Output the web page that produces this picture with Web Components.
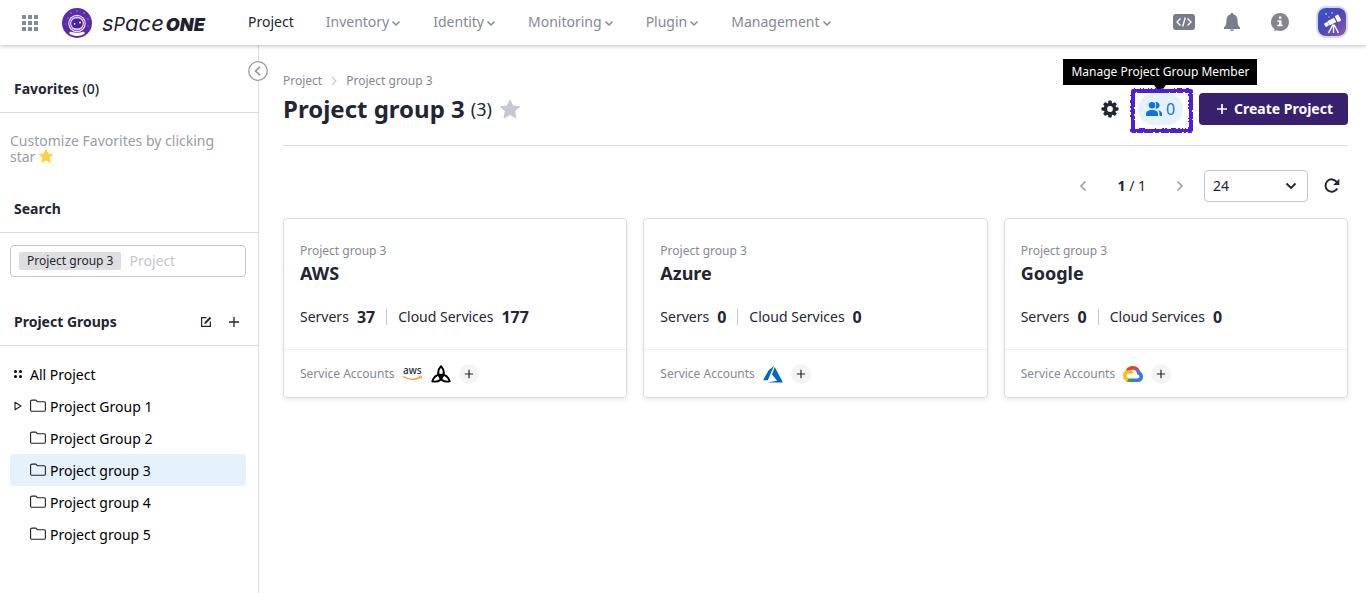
<!DOCTYPE html>
<html lang="en">
<head>
<meta charset="utf-8">
<meta name="viewport" content="width=device-width, initial-scale=1">
<title>SpaceONE - Project group 3</title>
<style>
  body { margin: 0; background: #fff; color: #232533; font: 14px/20px "Noto Sans", sans-serif; }
</style>
</head>
<body>
<space-app></space-app>

<script>
const ICONS = {
  grid: [16, 16, '<g fill="#858895"><path d="M0 0h4v4H0zM6 0h4v4H6zM12 0h4v4h-4zM0 6h4v4H0zM6 6h4v4H6zM12 6h4v4h-4zM0 12h4v4H0zM6 12h4v4H6zM12 12h4v4h-4z"/></g>'],
  astronaut: [30, 30, '<circle cx="15" cy="15" r="15" fill="#5a2aa8"/><g fill="#b79be0"><circle cx="6" cy="10" r=".7"/><circle cx="9" cy="5" r=".7"/><circle cx="15" cy="3" r=".7"/><circle cx="22" cy="5" r=".8"/><circle cx="26" cy="11" r=".7"/><circle cx="4" cy="16" r=".6"/><circle cx="26" cy="18" r=".6"/></g><circle cx="15" cy="15.500" r="8.800" fill="#e6dcf6"/><circle cx="15" cy="15.500" r="7.600" fill="#5a2aa8"/><circle cx="15" cy="15.500" r="7" fill="#d9caf2"/><rect x="9.300" y="10.500" width="11.400" height="9.800" rx="4.800" fill="#4c1f9c"/><circle cx="12.600" cy="15.800" r=".9" fill="#fff"/><circle cx="18" cy="14.500" r=".9" fill="#fff"/><path d="M7.500 24.500q0-1.200 1.500-.7 6 2 12 0 1.500-.5 1.500.7v1.500Q15 30 7.500 26z" fill="#fff"/>'],
  caret: [10, 10, '<path d="M1.500 3.500 5 7l3.500-3.500" fill="none" stroke="#858895" stroke-width="1.500"/>'],
  code: [22, 16, '<rect width="22" height="16" rx="3" fill="#797c89"/><path d="M7.500 4.500 4 8l3.500 3.500M14.500 4.500 18 8l-3.500 3.500M12.300 3.500l-2.600 9" fill="none" stroke="#fff" stroke-width="1.400"/>'],
  bell: [16, 18, '<path d="M8 0c.8 0 1.200.5 1.200 1.200C12 1.900 13.500 4 13.500 7c0 4.500 1.200 6.500 2.500 7.500V16H0v-1.500C1.300 13.500 2.500 11.500 2.500 7c0-3 1.500-5.100 4.300-5.800C6.800.5 7.200 0 8 0zM6 16.500h4Q9.700 18 8 18t-2-1.500z" fill="#797c89"/>'],
  info: [18, 18, '<path d="M9 0a9 9 0 1 1-3.500 17.300L3.500 18.200l-.1-2.200A9 9 0 0 1 9 0z" fill="#85868c"/><path d="M8 3.600h2.400v2.200H8zM6.500 7.200h4v4.500h1.300v1.500H6.300v-1.500h1.700V8.700H6.500z" fill="#fff"/>'],
  telescope: [32, 32, '<defs><linearGradient id="g" x1="0" y1="0" x2="1" y2="1"><stop offset="0" stop-color="#3454d1"/><stop offset=".5" stop-color="#4c48b8"/><stop offset="1" stop-color="#9659b0"/></linearGradient></defs><rect width="32" height="32" rx="10" fill="#d8d8e4"/><rect x="2" y="2" width="28" height="28" rx="8" fill="url(#g)"/><g fill="#fff"><rect x="-2" y="-2" width="4" height="4" rx="1" transform="translate(10.500 18.500) rotate(-28)"/><rect x="-4" y="-2.500" width="7.500" height="5" transform="translate(16 15.500) rotate(-28)"/><rect x="-1.500" y="-3.500" width="4" height="7" rx="1" transform="translate(21.500 12.500) rotate(-28)"/><circle cx="10" cy="8" r=".8"/><circle cx="16" cy="7" r=".7"/><circle cx="13" cy="11" r=".6"/></g><path d="M17 18.500 12.500 27M17.500 18.500V27M18 18.500 22.500 27" stroke="#fff" stroke-width="1.400"/>'],
  collapse: [20, 20, '<circle cx="10" cy="10" r="9.300" fill="#fff" stroke="#999ca8" stroke-width="1.300"/><path d="m12 5.800-4.500 4.200 4.500 4.200" fill="none" stroke="#898c98" stroke-width="1.500"/>'],
  starYellow: [14, 14, '<path d="m7 .6 2 4.300 4.600.5-3.400 3.200 1 4.700L7 10.900l-4.200 2.400 1-4.700L.4 5.400 5 4.900z" fill="#ffd13d" stroke="#ffd13d" stroke-linejoin="round"/>'],
  star: [22, 20, '<path d="m11 1 2.900 6 6.600.7-4.900 4.500 1.400 6.700-6-3.400-6 3.400 1.400-6.700L1.500 7.700 8.100 7z" fill="#c5c7d1" stroke="#c5c7d1" stroke-linejoin="round"/>'],
  edit: [12, 12, '<path d="M6.500 1.600H1.600v8.800h8.800V5.500" fill="none" stroke="#232533" stroke-width="1.200"/><path d="m4.300 7.900.4-1.900L9.900.8l1.400 1.400L6.100 7.400z" fill="#232533"/>'],
  plus: [12, 12, '<path d="M6 1v10M1 6h10" stroke="#232533" stroke-width="1.300"/>'],
  plusSmall: [10, 10, '<path d="M5 .8v8.400M.8 5h8.400" stroke="#232533" stroke-width="1.200"/>'],
  plusBold: [12, 12, '<path d="M6 1v10M1 6h10" stroke="#fff" stroke-width="1.700"/>'],
  dots: [10, 10, '<g fill="#000"><circle cx="2.500" cy="2.500" r="1.500"/><circle cx="7.500" cy="2.500" r="1.500"/><circle cx="2.500" cy="7.500" r="1.500"/><circle cx="7.500" cy="7.500" r="1.500"/></g>'],
  triangle: [10, 10, '<path d="M2 1.200v7.600L8 5z" fill="none" stroke="#222" stroke-linejoin="round" stroke-width="1.100"/>'],
  folder: [16, 14, '<path d="M.6 2.600Q.6 1.100 2 1.100h3.800l1.600 1.600H14q1.400 0 1.400 1.400v6.800q0 1.400-1.400 1.400H2q-1.400 0-1.400-1.400z" fill="none" stroke="#222" stroke-width="1.100"/>'],
  crumb: [6, 10, '<path d="m1 1 4 4-4 4" fill="none" stroke="#c9cbd3" stroke-width="1.100"/>'],
  gear: [18, 18, '<g fill="#232533"><rect x="7.200" y=".5" width="3.600" height="17" rx="1"/><rect x=".5" y="7.200" width="17" height="3.600" rx="1"/><g transform="rotate(45 9 9)"><rect x="7.200" y=".7" width="3.600" height="16.600" rx="1"/><rect x=".7" y="7.200" width="16.600" height="3.600" rx="1"/></g><circle cx="9" cy="9" r="6.300"/></g><circle cx="9" cy="9" r="2.900" fill="#fff"/>'],
  people: [16, 14, '<g fill="#0a74e6"><circle cx="6" cy="3.300" r="3.200"/><path d="M0 14v-2.200C0 9.200 2.700 8 6 8s6 1.200 6 3.800V14z"/><path d="M9.300.3a3.200 3.200 0 1 1 0 6Q11.200 3.300 9.300.3zM12 8.200c2.400.4 4 1.500 4 3.600V14h-2.500v-2.200q0-2.200-1.500-3.600z"/></g>'],
  prev: [8, 12, '<path d="M6.500 1.500 2 6l4.500 4.500" fill="none" stroke="#999ca8" stroke-width="1.600"/>'],
  next: [8, 12, '<path d="M1.500 1.500 6 6l-4.500 4.500" fill="none" stroke="#999ca8" stroke-width="1.600"/>'],
  chevron: [12, 8, '<path d="m1.500 1.500 4.500 4.500 4.500-4.500" fill="none" stroke="#232533" stroke-width="1.900"/>'],
  refresh: [16, 16, '<path d="M13.200 10.500A6.200 6.200 0 1 1 12.800 4" fill="none" stroke="#232533" stroke-width="2"/><path d="M15.300.8v6.200H9.100z" fill="#232533"/>'],
  aws: [20, 20, '<text x="0" y="10" font-family="Noto Sans, sans-serif" font-size="10" font-weight="500" fill="#252f3e">aws</text><path d="M0 12.500q9 5.300 17.500.7" fill="none" stroke="#f7981f" stroke-width="1.400"/><path d="M15.500 12.200q3.400-.7 3.200.3 0 1.300-.9 2.600" fill="none" stroke="#f7981f"/>'],
  knot: [20, 20, '<g fill="none" stroke="#000" stroke-width="1.900" stroke-linejoin="round"><path d="M10 2.200C6.300 6.500 6.500 11 10 14.500 13.500 11 13.700 6.500 10 2.200z"/><path d="M10 2.200C6.300 6.500 6.500 11 10 14.500 13.500 11 13.700 6.500 10 2.200z" transform="rotate(120 10 12.300)"/><path d="M10 2.200C6.300 6.500 6.500 11 10 14.500 13.500 11 13.700 6.500 10 2.200z" transform="rotate(240 10 12.300)"/></g>'],
  azure: [20, 18, '<path d="M11 .8 5.500 5.500 0 15.300h4.800zM11.700 2 9 9.600l5.200 6.100L4.300 17.400H20z" fill="#0067c4"/>'],
  gcp: [20, 18, '<g fill="none" stroke-width="3.600"><path d="M4.300 6.500A6 6 0 0 1 14.700 5.300" stroke="#e8402f"/><path d="M14.200 4.800q1.300 1.300 1.500 3.200 2.500.7 2.500 3.700 0 3.600-4 3.600H10" stroke="#3b78e7"/><path d="M10.500 15.300H6q-1.200 0-2-.4" stroke="#31a350"/><path d="M5 14.700q-3.200-1.100-3.200-4 0-3.700 4-3.900 2.200 0 3.200 1.700" stroke="#fbbc1f"/></g>']
};

/* Attaches an open shadow root filled from a markup string. */
function paint(el, markup) {
  const t = document.createElement('template');
  t.innerHTML = '<style>*{box-sizing:border-box}button{font:inherit;color:inherit;border:0;background:none;padding:0;cursor:pointer}a{color:inherit;text-decoration:none}</style>' + markup;
  el.attachShadow({ mode: 'open' }).append(t.content.cloneNode(true));
}

customElements.define('ui-icon', class extends HTMLElement {
  connectedCallback() {
    if (this.shadowRoot) return;
    const [w, h, body] = ICONS[this.getAttribute('name')];
    paint(this, `<style>:host{display:inline-flex;flex:none}svg{display:block;overflow:visible}</style>
      <svg width="${w}" height="${h}" viewBox="0 0 ${w} ${h}" aria-hidden="true">${body}</svg>`);
  }
});

customElements.define('brand-logo', class extends HTMLElement {
  connectedCallback() {
    if (this.shadowRoot) return;
    paint(this, `<style>
      :host{display:block}
      a{display:flex;align-items:center;gap:10px;color:#1f2130}
      .word{font-family:Inter,sans-serif;font-style:italic;line-height:30px;height:30px;white-space:nowrap}
      .low{font-size:22px;font-weight:400}
      .cap{font-size:18px;font-weight:400}
      .one{font-size:18px;font-weight:900;margin-left:2px}
    </style>
    <a href="#" aria-label="SpaceONE home"><ui-icon name="astronaut"></ui-icon><span class="word"><span class="low">s</span><span class="cap">P</span><span class="low">ace</span><span class="one">ONE</span></span></a>`);
  }
});

customElements.define('nav-item', class extends HTMLElement {
  connectedCallback() {
    if (this.shadowRoot) return;
    paint(this, `<style>
      :host{display:block;color:#858895}
      :host([active]){color:#232533}
      a{display:flex;align-items:center;gap:2px}
      ui-icon{padding-top:2px}
    </style><a href="#"><slot></slot>${this.hasAttribute('active') ? '' : '<ui-icon name="caret"></ui-icon>'}</a>`);
  }
});

customElements.define('top-bar', class extends HTMLElement {
  connectedCallback() {
    if (this.shadowRoot) return;
    paint(this, `<style>
      :host{display:block;position:relative;z-index:2;background:#fff;box-shadow:0 1px 4px rgba(0,0,0,.25)}
      header{display:flex;align-items:center;height:45px;padding:0 18px 0 22px}
      brand-logo{margin-left:24px;width:186px}
      button{display:flex}
      nav{display:flex;gap:32px;flex:1;padding-bottom:2px}
      .tools{display:flex;align-items:center;gap:24px;padding-bottom:2px}
      .tools button{justify-content:center;min-width:24px}
    </style>
    <header>
      <button aria-label="All menus"><ui-icon name="grid"></ui-icon></button>
      <brand-logo></brand-logo>
      <nav aria-label="Main">
        <nav-item active>Project</nav-item><nav-item>Inventory</nav-item><nav-item>Identity</nav-item>
        <nav-item>Monitoring</nav-item><nav-item>Plugin</nav-item><nav-item>Management</nav-item>
      </nav>
      <div class="tools">
        <button aria-label="Developer"><ui-icon name="code"></ui-icon></button>
        <button aria-label="Notifications"><ui-icon name="bell"></ui-icon></button>
        <button aria-label="Information"><ui-icon name="info"></ui-icon></button>
        <button aria-label="Account"><ui-icon name="telescope"></ui-icon></button>
      </div>
    </header>`);
  }
});

customElements.define('side-section', class extends HTMLElement {
  connectedCallback() {
    if (this.shadowRoot) return;
    paint(this, `<style>
      :host{display:block}
      header{display:flex;align-items:center;height:48px;padding:0 18px 0 14px;border-bottom:1px solid #dddddf}
      h2{margin:0;font-size:14px;line-height:20px;font-weight:700;flex:1}
      .body{padding:12px 12px 21px 10px}
    </style>
    <header><h2><slot name="title"></slot></h2><slot name="actions"></slot></header>
    <div class="body"><slot></slot></div>`);
  }
});

customElements.define('tree-item', class extends HTMLElement {
  connectedCallback() {
    if (this.shadowRoot) return;
    const lead = this.getAttribute('lead');
    paint(this, `<style>
      :host{display:block;color:#000}
      a{display:flex;align-items:center;height:32px;padding-top:2px;border-radius:4px}
      :host([selected]) a{background:#e5f2fe}
      .lead{display:flex;width:20px;padding-left:3px;padding-bottom:2px}
      .folder{margin-right:4px;padding-bottom:2px}
    </style>
    <a href="#"><span class="lead">${lead ? `<ui-icon name="${lead}"></ui-icon>` : ''}</span>${lead === 'dots' ? '' : '<ui-icon class="folder" name="folder"></ui-icon>'}<slot></slot></a>`);
  }
});

customElements.define('side-bar', class extends HTMLElement {
  connectedCallback() {
    if (this.shadowRoot) return;
    paint(this, `<style>
      :host{display:block;position:relative;padding-top:20px;border-right:1px solid #dddddf}
      .collapse{position:absolute;top:16px;right:-10px;display:flex}
      .count{font-weight:500}
      p{margin:8px 0 -1px;color:#999ca8;line-height:16px;max-width:220px}
      p ui-icon{vertical-align:-1px}
      label{display:flex;align-items:center;gap:8px;height:32px;padding:0 8px;border:1px solid #c3c4cc;border-radius:4px}
      .tag{flex:none;background:#dedee1;border-radius:2px;padding:0 8px;font-size:12px;line-height:18px}
      input{flex:1;min-width:0;border:0;outline:0;padding:0;background:none;font:inherit}
      input::placeholder{color:#c5c7d1;opacity:1}
      .actions{display:flex;align-items:center;gap:16px}
      .actions button{display:flex}
    </style>
    <button class="collapse" aria-label="Collapse sidebar"><ui-icon name="collapse"></ui-icon></button>
    <side-section><span slot="title">Favorites <span class="count">(0)</span></span>
      <p>Customize Favorites by clicking star <ui-icon name="starYellow"></ui-icon></p>
    </side-section>
    <side-section><span slot="title">Search</span>
      <label><span class="tag">Project group 3</span><input type="text" placeholder="Project" aria-label="Search project"></label>
    </side-section>
    <side-section><span slot="title">Project Groups</span>
      <div class="actions" slot="actions">
        <button aria-label="Edit groups"><ui-icon name="edit"></ui-icon></button>
        <button aria-label="Add group"><ui-icon name="plus"></ui-icon></button>
      </div>
      <tree-item lead="dots">All Project</tree-item>
      <tree-item lead="triangle">Project Group 1</tree-item>
      <tree-item>Project Group 2</tree-item>
      <tree-item selected>Project group 3</tree-item>
      <tree-item>Project group 4</tree-item>
      <tree-item>Project group 5</tree-item>
    </side-section>`);
  }
});

customElements.define('member-button', class extends HTMLElement {
  connectedCallback() {
    if (this.shadowRoot) return;
    paint(this, `<style>
      :host{display:block;position:relative}
      button{display:flex;align-items:center;justify-content:center;gap:4px;width:45px;height:32px;border-radius:16px;background:#e5f2fe;color:#0a74e6;font-size:16px}
      .frame{position:absolute;left:-9px;top:-6px;pointer-events:none;overflow:visible}
      .tip{position:absolute;top:-34px;left:50%;transform:translateX(-50%);padding:3px 8px;background:#000;color:#fff;font-size:12px;line-height:20px;white-space:nowrap}
      .tip::after{content:"";position:absolute;top:100%;left:50%;margin-left:-6px;border:6px solid transparent;border-top:8px solid #000;border-bottom:0}
    </style>
    <button aria-describedby="tip"><ui-icon name="people"></ui-icon>0</button>
    <span class="tip" id="tip" role="tooltip">Manage Project Group Member</span>
    <svg class="frame" width="63" height="45" aria-hidden="true"><filter id="rough" x="-10%" y="-10%" width="120%" height="120%"><feTurbulence baseFrequency=".3" numOctaves="1" seed="4"/><feDisplacementMap in="SourceGraphic" scale="2" xChannelSelector="R" yChannelSelector="G"/></filter><rect x="3" y="3" width="58" height="40" fill="none" stroke="#4f1be0" stroke-width="4" stroke-linejoin="round" filter="url(#rough)"/></svg>`);
  }
});

customElements.define('page-heading', class extends HTMLElement {
  connectedCallback() {
    if (this.shadowRoot) return;
    paint(this, `<style>
      :host{display:block;padding-bottom:20px;border-bottom:1px solid #dddddf}
      .crumbs{display:flex;align-items:center;gap:9px;font-size:12px;line-height:16px;color:#858895}
      .row{display:flex;align-items:center;height:32px;margin-top:4px}
      h1{margin:0;font-size:24px;line-height:32px;font-weight:700}
      .count{margin:0 7px 0 6px;font-size:18px}
      .plain{display:flex}
      .actions{display:flex;align-items:center;margin-left:auto}
      member-button{margin:0 16px 0 19px}
      .create{display:flex;align-items:center;gap:6px;height:32px;padding:0 15px 0 17px;border-radius:4px;background:#37216f;color:#fff;font-weight:700}
    </style>
    <nav class="crumbs" aria-label="Breadcrumb"><a href="#">Project</a><ui-icon name="crumb"></ui-icon><a href="#">Project group 3</a></nav>
    <div class="row">
      <h1>Project group 3</h1><span class="count">(3)</span>
      <button class="plain" aria-label="Add to favorites"><ui-icon name="star"></ui-icon></button>
      <div class="actions">
        <button class="plain" aria-label="Settings"><ui-icon name="gear"></ui-icon></button>
        <member-button></member-button>
        <button class="create"><ui-icon name="plusBold"></ui-icon>Create Project</button>
      </div>
    </div>`);
  }
});

customElements.define('list-toolbar', class extends HTMLElement {
  connectedCallback() {
    if (this.shadowRoot) return;
    paint(this, `<style>
      :host{display:flex;align-items:center;justify-content:flex-end;padding:24px 8px 16px 0}
      button{display:flex}
      .page{margin:0 30px}
      .size{position:relative;margin:0 16px 0 20px;width:104px}
      select{appearance:none;display:block;width:100%;height:32px;padding:0 8px;border:1px solid #c3c4cc;border-radius:4px;background:#fff;color:inherit;font:inherit}
      .size ui-icon{position:absolute;right:11px;top:12px;pointer-events:none}
    </style>
    <button aria-label="Previous page"><ui-icon name="prev"></ui-icon></button>
    <span class="page"><b>1</b> / 1</span>
    <button aria-label="Next page"><ui-icon name="next"></ui-icon></button>
    <div class="size"><select aria-label="Page size"><option>24</option><option>36</option><option>48</option></select><ui-icon name="chevron"></ui-icon></div>
    <button aria-label="Refresh"><ui-icon name="refresh"></ui-icon></button>`);
  }
});

customElements.define('project-card', class extends HTMLElement {
  connectedCallback() {
    if (this.shadowRoot) return;
    const get = n => this.getAttribute(n);
    paint(this, `<style>
      :host{display:block;border:1px solid #dddddf;border-radius:4px;box-shadow:0 2px 4px rgba(0,0,0,.08)}
      .body{padding:24px 16px 20px}
      .group{font-size:12px;line-height:16px;color:#858895}
      h2{margin:0;font-size:18px;line-height:28px;font-weight:700}
      .stats{display:flex;align-items:center;gap:8px;height:24px;margin-top:18px;white-space:nowrap}
      .stats b{font-size:16px}
      .bar{width:1px;height:16px;margin:0 3px;background:#c5c7d1}
      footer{display:flex;align-items:center;gap:8px;height:48px;padding:0 16px;border-top:1px solid #f0f0f2;font-size:12px;color:#858895}
      footer button{display:flex;align-items:center;justify-content:center;width:20px;height:20px;border-radius:50%;background:#f4f4f5}
    </style>
    <div class="body">
      <div class="group">Project group 3</div>
      <h2><slot></slot></h2>
      <div class="stats"><span>Servers</span><b>${get('servers')}</b><span class="bar"></span><span>Cloud Services</span><b>${get('services')}</b></div>
    </div>
    <footer><span>Service Accounts</span>${get('accounts').split(' ').map(n => `<ui-icon name="${n}"></ui-icon>`).join('')}<button aria-label="Add service account"><ui-icon name="plusSmall"></ui-icon></button></footer>`);
  }
});

customElements.define('space-app', class extends HTMLElement {
  connectedCallback() {
    if (this.shadowRoot) return;
    paint(this, `<style>
      :host{display:flex;flex-direction:column;min-height:100vh}
      .layout{display:grid;grid-template-columns:259px minmax(0,1fr);flex:1}
      main{padding:28px 18px 24px 24px}
      .cards{display:grid;grid-template-columns:repeat(3,minmax(0,1fr));gap:16px}
    </style>
    <top-bar></top-bar>
    <div class="layout">
      <side-bar></side-bar>
      <main>
        <page-heading></page-heading>
        <list-toolbar></list-toolbar>
        <div class="cards">
          <project-card servers="37" services="177" accounts="aws knot">AWS</project-card>
          <project-card servers="0" services="0" accounts="azure">Azure</project-card>
          <project-card servers="0" services="0" accounts="gcp">Google</project-card>
        </div>
      </main>
    </div>`);
  }
});
</script>
</body>
</html>
